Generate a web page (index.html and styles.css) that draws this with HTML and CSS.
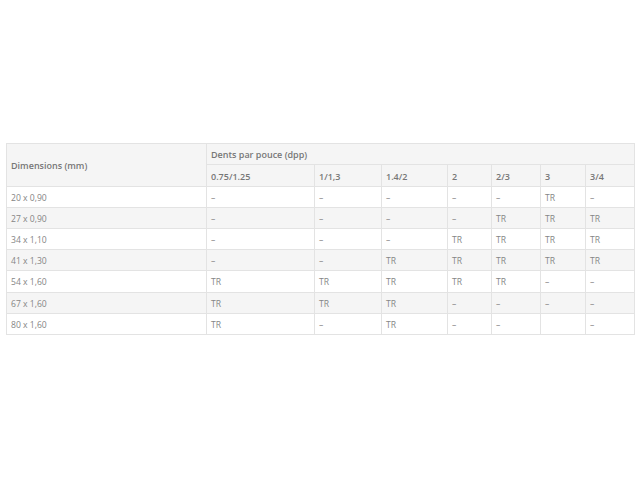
FILE: index.html
```html
<!DOCTYPE html>
<html lang="fr">
<head>
<meta charset="utf-8">
<title>Dents par pouce</title>
<link rel="stylesheet" href="styles.css">
</head>
<body>
<div class="page">
<table class="spec">
<colgroup>
<col class="c1"><col class="c2"><col class="c3"><col class="c4"><col class="c5"><col class="c6"><col class="c7"><col class="c8">
</colgroup>
<thead>
<tr class="h1"><th rowspan="2">Dimensions (mm)</th><th colspan="7">Dents par pouce (dpp)</th></tr>
<tr class="h2"><th>0.75/1.25</th><th>1/1,3</th><th>1.4/2</th><th>2</th><th>2/3</th><th>3</th><th>3/4</th></tr>
</thead>
<tbody>
<tr><td>20 x 0,90</td><td>–</td><td>–</td><td>–</td><td>–</td><td>–</td><td>TR</td><td>–</td></tr>
<tr><td>27 x 0,90</td><td>–</td><td>–</td><td>–</td><td>–</td><td>TR</td><td>TR</td><td>TR</td></tr>
<tr><td>34 x 1,10</td><td>–</td><td>–</td><td>–</td><td>TR</td><td>TR</td><td>TR</td><td>TR</td></tr>
<tr><td>41 x 1,30</td><td>–</td><td>–</td><td>TR</td><td>TR</td><td>TR</td><td>TR</td><td>TR</td></tr>
<tr><td>54 x 1,60</td><td>TR</td><td>TR</td><td>TR</td><td>TR</td><td>TR</td><td>–</td><td>–</td></tr>
<tr><td>67 x 1,60</td><td>TR</td><td>TR</td><td>TR</td><td>–</td><td>–</td><td>–</td><td>–</td></tr>
<tr><td>80 x 1,60</td><td>TR</td><td>–</td><td>TR</td><td>–</td><td>–</td><td></td><td>–</td></tr>
</tbody>
</table>
</div>
</body>
</html>
```
FILE: styles.css
```css
html, body { margin: 0; padding: 0; background: #fff; }
.page { padding: 143px 0 0 6px; }
.spec {
  border-collapse: collapse;
  table-layout: fixed;
  width: 628px;
  font-family: "Open Sans", sans-serif;
  font-size: 8.6px;
  color: #858585;
}
.c1 { width: 200px; } .c2 { width: 108px; } .c3 { width: 67px; } .c4 { width: 66px; }
.c5 { width: 44px; } .c6 { width: 49px; } .c7 { width: 45px; } .c8 { width: 49px; }
.spec th, .spec td {
  border: 1px solid #e3e3e3;
  padding: 1px 4px 0;
  text-align: left;
  height: 20px;
  box-sizing: border-box;
  white-space: nowrap;
}
.spec td { height: 21px; }
.spec th { font-size: 9px; font-weight: 600; color: #777; background: #f5f5f5; }
.spec .h1 th { height: 21px; }
.spec .h2 th { height: 22px; }
.spec tbody tr:nth-child(even) td { background: #f5f5f5; }
.spec tbody tr:nth-child(5) td { height: 22px; }
```
